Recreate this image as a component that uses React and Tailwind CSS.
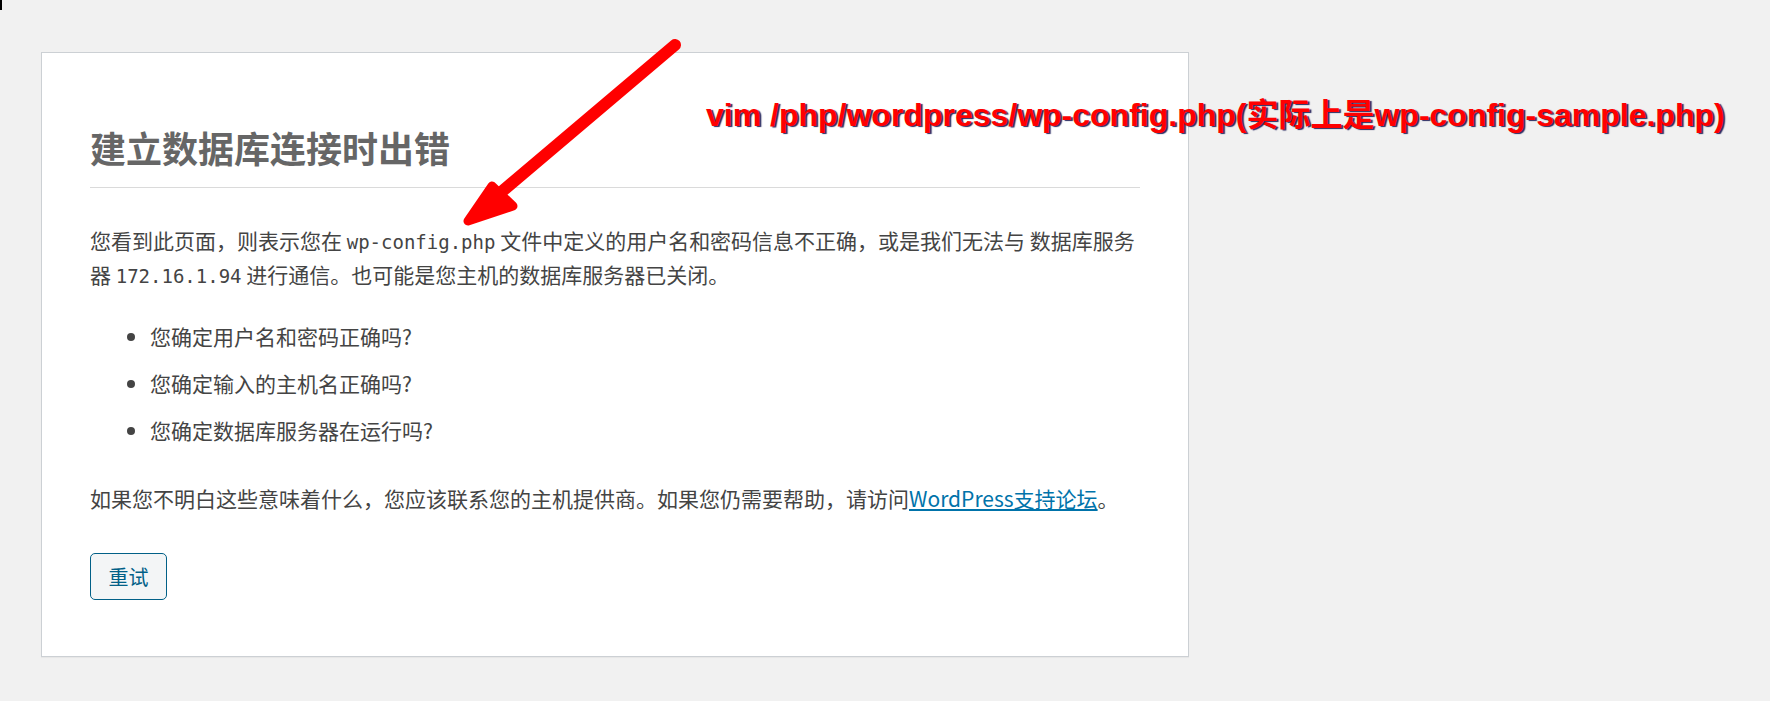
import React from "react";

const cjk = "font-['Noto_Sans_CJK_SC','Noto_Sans',sans-serif]";
const mono = "font-['DejaVu_Sans_Mono','Liberation_Mono',monospace] text-[19px] leading-[16px]";

export default function App() {
  return (
    <div className={`relative w-full h-[701px] overflow-hidden bg-[#f1f1f1] pt-[52px] pl-[41px] ${cjk}`}>
      <div className="absolute left-0 top-0 w-[2px] h-[10px] bg-black" />

      <div className="w-[1148px] border border-[#ccd0d4] bg-white px-[48px] pt-[24px] pb-[56px] text-[#444] shadow-[0_1px_1px_rgba(0,0,0,0.04)]">
        <h1 className="mt-[52px] pb-[22px] border-b border-[#dadada] text-[36px] leading-[36px] font-bold text-[#666]">
          建立数据库连接时出错
        </h1>

        <p className="mt-[35px] text-[21px] leading-[34px] whitespace-nowrap">
          您看到此页面，则表示您在 <code className={mono}>wp-config.php</code> 文件中定义的用户名和密码信息不正确，或是我们无法与 数据库服务
          <br />
          器 <code className={mono}>172.16.1.94</code> 进行通信。也可能是您主机的数据库服务器已关闭。
        </p>

        <ul className="mt-[29px] pl-[60px] list-disc text-[21px] leading-[32px]">
          <li className="mb-[15px]">您确定用户名和密码正确吗?</li>
          <li className="mb-[15px]">您确定输入的主机名正确吗?</li>
          <li className="mb-[15px]">您确定数据库服务器在运行吗?</li>
        </ul>

        <p className="mt-[35px] text-[21px] leading-[34px] whitespace-nowrap">
          如果您不明白这些意味着什么，您应该联系您的主机提供商。如果您仍需要帮助，请访问
          <a href="#" className="text-[#0073aa] underline">WordPress支持论坛</a>。
        </p>

        <div className="mt-[38px]">
          <button className="flex items-center justify-center w-[77px] h-[47px] rounded-[5px] border border-[#016087] bg-[#f3f5f6] text-[#016087] text-[20px] leading-none">
            重试
          </button>
        </div>
      </div>

      <div className="absolute left-[706px] top-[99px] whitespace-nowrap font-['Liberation_Sans','Noto_Sans_CJK_SC',sans-serif] text-[32px] leading-[32px] font-bold text-[#ff0000] [text-shadow:2px_1px_1px_#2a2a60]">
        vim /php/wordpress/wp-config.php(实际上是wp-config-sample.php)
      </div>

      <svg className="absolute left-0 top-0 pointer-events-none" width="1770" height="701" viewBox="0 0 1770 701">
        <line x1="675" y1="45" x2="486" y2="205" stroke="#ff0000" strokeWidth="12" strokeLinecap="round" />
        <polygon points="468,221 492,186 513,206" fill="#ff0000" stroke="#ff0000" strokeWidth="9" strokeLinejoin="round" />
      </svg>
    </div>
  );
}
